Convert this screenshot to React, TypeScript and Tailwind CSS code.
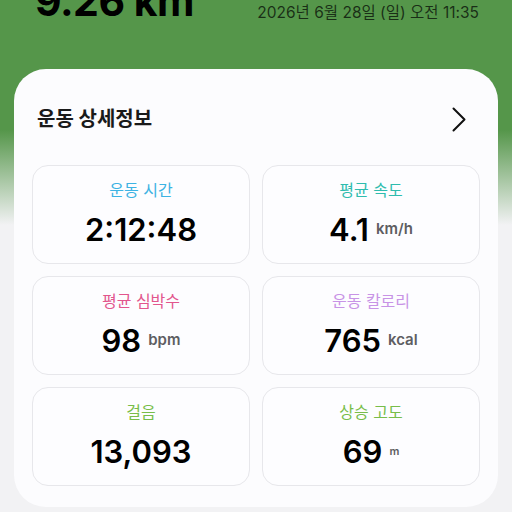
interface Stat {
	label: string
	color: string
	value: string
	unit?: string
	unitClass?: string
}

const stats: Stat[] = [
	{ label: '운동 시간', color: 'text-[#3db3e3]', value: '2:12:48' },
	{ label: '평균 속도', color: 'text-[#2fbcae]', value: '4.1', unit: 'km/h', unitClass: 'text-[15px]' },
	{ label: '평균 심박수', color: 'text-[#e2568d]', value: '98', unit: 'bpm', unitClass: 'text-[15px]' },
	{ label: '운동 칼로리', color: 'text-[#c893e6]', value: '765', unit: 'kcal', unitClass: 'text-[15px]' },
	{ label: '걸음', color: 'text-[#78bd4a]', value: '13,093' },
	{ label: '상승 고도', color: 'text-[#78bd4a]', value: '69', unit: 'm', unitClass: 'text-[11px]' },
]

const font = { fontFamily: 'Inter, "Noto Sans CJK KR", sans-serif' }

const App = () => {
	return (
		<div
			className='h-[512px] w-[512px] overflow-hidden bg-[linear-gradient(180deg,#55964a_0px,#55964a_130px,#f2f2f4_225px,#f2f2f4_100%)]'
			style={font}
		>
			{/* 상단 거리 / 날짜 */}
			<div className='h-[69px] flex items-start justify-between pl-[35px] pr-[33px]'>
				<div className='mt-[-20px] text-[41px] leading-[42px] font-bold text-black tracking-[-0.5px]'>
					9.26 km
				</div>
				<div className='mt-[2px] text-[15.5px] leading-[22px] text-black/70'>
					2026년 6월 28일 (일) 오전 11:35
				</div>
			</div>

			{/* 운동 상세정보 카드 */}
			<div className='mx-[14px] rounded-[32px] bg-[#fcfcfe] px-[18px] pt-[38px] pb-[21px]'>
				<div className='flex items-center justify-between pl-[5px] pr-[14px] mb-[34px] h-[24px]'>
					<h2 className='text-[20px] leading-[24px] font-bold text-[#1a1a1a]'>운동 상세정보</h2>
					<svg width='14' height='25' viewBox='0 0 14 25' fill='none'>
						<path d='M1.5 1.5 L12.5 12.5 L1.5 23.5' stroke='#111' strokeWidth='2' strokeLinecap='round' strokeLinejoin='round' />
					</svg>
				</div>

				<div className='grid grid-cols-2 gap-x-[12px] gap-y-[12px]'>
					{stats.map((s) => (
						<div
							key={s.label}
							className='h-[99px] rounded-[16px] border-[1.5px] border-[#e7e7eb] bg-[#fdfdff] flex flex-col items-center pt-[13px]'
						>
							<div className={`text-[16px] leading-[22px] ${s.color}`}>{s.label}</div>
							<div className='mt-[10px] flex items-center gap-[7px] h-[38px]'>
								<span className='text-[31px] leading-[38px] font-semibold text-black'>{s.value}</span>
								{s.unit && (
									<span className={`${s.unitClass} font-semibold text-[#5e5e62] mt-[-2px]`}>{s.unit}</span>
								)}
							</div>
						</div>
					))}
				</div>
			</div>
		</div>
	)
}

export default App
